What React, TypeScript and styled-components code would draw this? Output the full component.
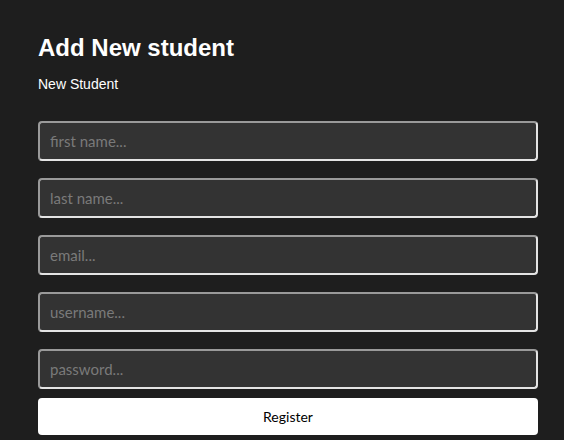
import React from "react";
import styled, { createGlobalStyle } from "styled-components";

const GlobalStyle = createGlobalStyle`
  html, body {
    margin: 0;
    padding: 0;
    background: #1e1e1e;
  }
  body {
    font-family: "Liberation Sans", Arial, sans-serif;
    color: #ffffff;
  }
`;

const Page = styled.main`
  width: 500px;
  padding: 34px 0 0 38px;
  display: flex;
  flex-direction: column;
`;

const Title = styled.h1`
  margin: 0;
  font-size: 24px;
  line-height: 28px;
  font-weight: 700;
  color: #ffffff;
`;

const Subtitle = styled.p`
  margin: 14px 0 0;
  font-size: 14px;
  line-height: 16px;
  color: #ffffff;
`;

const Form = styled.form`
  margin-top: 29px;
  display: flex;
  flex-direction: column;
  gap: 9px;
`;

const Fields = styled.div`
  display: flex;
  flex-direction: column;
  gap: 17px;
`;

const Field = styled.input`
  box-sizing: border-box;
  width: 100%;
  height: 40px;
  padding: 0 10px;
  background: #333333;
  border: 2px solid;
  border-color: #9a9a9a #e4e4e4 #e4e4e4 #9a9a9a;
  border-radius: 4px;
  color: #ffffff;
  font-family: Lato, "Noto Sans", sans-serif;
  font-size: 15px;
  outline: none;

  &::placeholder {
    color: #7a7a7a;
  }
`;

const Submit = styled.button`
  box-sizing: border-box;
  width: 100%;
  height: 37px;
  border: none;
  border-radius: 4px;
  background: #ffffff;
  color: #000000;
  font-family: Lato, "Noto Sans", sans-serif;
  font-size: 14px;
  cursor: pointer;
`;

const fields = [
  { name: "firstName", placeholder: "first name...", type: "text" },
  { name: "lastName", placeholder: "last name...", type: "text" },
  { name: "email", placeholder: "email...", type: "email" },
  { name: "username", placeholder: "username...", type: "text" },
  { name: "password", placeholder: "password...", type: "password" },
];

export default function App() {
  return (
    <>
      <GlobalStyle />
      <Page>
        <Title>Add New student</Title>
        <Subtitle>New Student</Subtitle>
        <Form onSubmit={(e) => e.preventDefault()}>
          <Fields>
            {fields.map((f) => (
              <Field key={f.name} name={f.name} type={f.type} placeholder={f.placeholder} />
            ))}
          </Fields>
          <Submit type="submit">Register</Submit>
        </Form>
      </Page>
    </>
  );
}
